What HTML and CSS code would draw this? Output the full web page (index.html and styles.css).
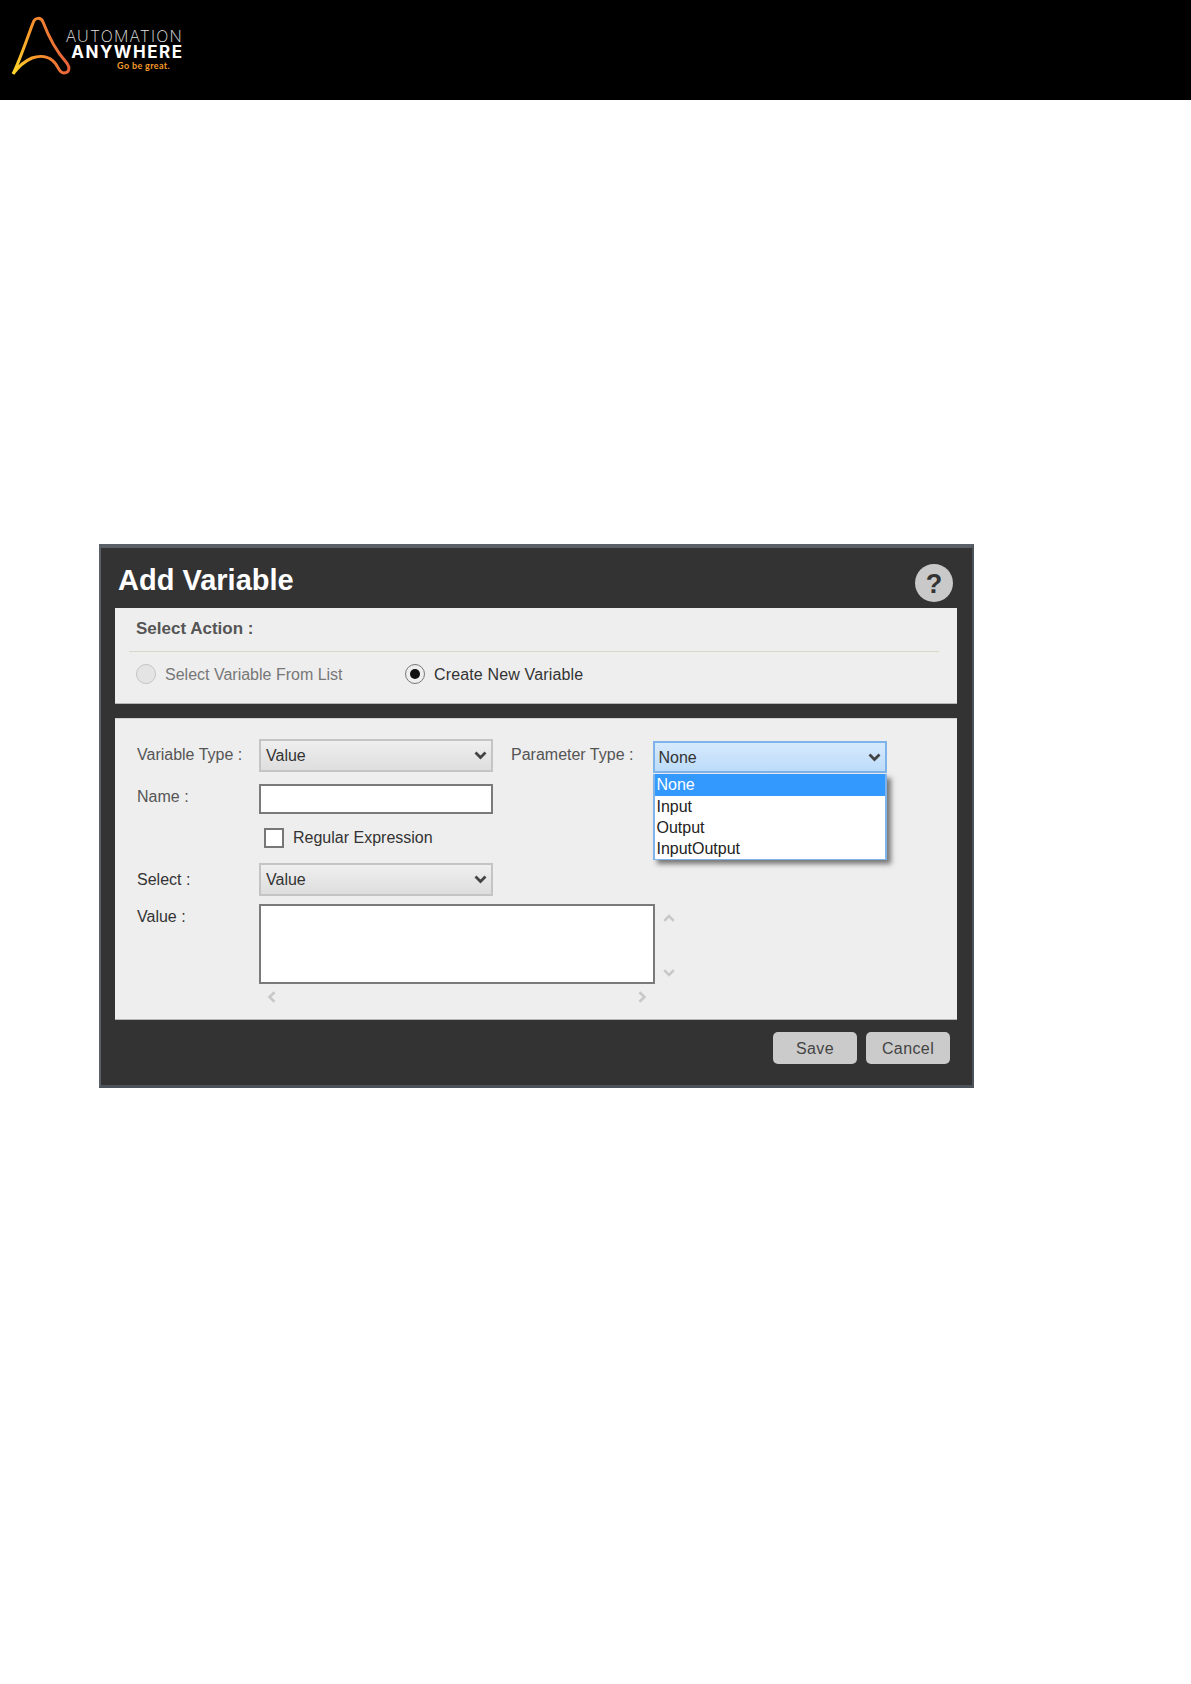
FILE: index.html
```html
<!DOCTYPE html>
<html lang="en">
<head>
<meta charset="utf-8">
<title>Add Variable</title>
<link rel="stylesheet" href="styles.css">
</head>
<body>
<header class="topbar">
  <div class="logo">
    <svg class="logo-mark" width="76" height="80" viewBox="0 0 76 80" fill="none">
      <defs>
        <linearGradient id="lg" gradientUnits="userSpaceOnUse" x1="13" y1="70" x2="68" y2="58">
          <stop offset="0" stop-color="#ffd72a"/>
          <stop offset="0.45" stop-color="#f9982c"/>
          <stop offset="1" stop-color="#e9603a"/>
        </linearGradient>
      </defs>
      <path d="M13 74 C20 60 28 36 33 23 C35 17 41 17 43 22 C48 35 57 52 66 62 C71 68 69 73 64 73 C59 73 58 66 55 63 C49 56 40 55 32 58 C25 61 18 67 13 74" stroke="url(#lg)" stroke-width="3" stroke-linejoin="round"/>
    </svg>
    <div class="logo-text">
      <div class="logo-top">AUTOMATION</div>
      <div class="logo-main">ANYWHERE</div>
      <div class="logo-tag">Go be great.</div>
    </div>
  </div>
</header>

<main class="dialog">
  <div class="dialog-head">
    <h1 class="dialog-title">Add Variable</h1>
    <div class="help">?</div>
  </div>

  <section class="panel panel-action">
    <div class="action-title">Select Action :</div>
    <div class="action-rule"></div>
    <div class="action-row">
      <div class="radio-item radio-item-first">
        <span class="radio radio-off"></span>
        <span class="radio-label-off">Select Variable From List</span>
      </div>
      <div class="radio-item">
        <span class="radio radio-on"></span>
        <span class="radio-label-on">Create New Variable</span>
      </div>
    </div>
  </section>

  <section class="panel panel-form">
    <div class="row row-type">
      <div class="label">Variable Type :</div>
      <div class="select">
        <span>Value</span>
        <svg class="chev" width="13" height="9" viewBox="0 0 13 9"><path d="M1.500 1.500 6.500 6.500 11.500 1.500" fill="none" stroke="#444" stroke-width="2.800"/></svg>
      </div>
      <div class="label label-param">Parameter Type :</div>
      <div class="param">
        <div class="select select-active">
          <span class="active-value">None</span>
          <svg class="chev" width="13" height="9" viewBox="0 0 13 9"><path d="M1.500 1.500 6.500 6.500 11.500 1.500" fill="none" stroke="#444" stroke-width="2.800"/></svg>
        </div>
        <ul class="menu">
          <li class="menu-sel">None</li>
          <li>Input</li>
          <li>Output</li>
          <li>InputOutput</li>
        </ul>
      </div>
    </div>

    <div class="row row-name">
      <div class="label label-name">Name :</div>
      <div class="input"></div>
    </div>

    <div class="row row-check">
      <span class="checkbox"></span>
      <span class="check-label">Regular Expression</span>
    </div>

    <div class="row row-select">
      <div class="label">Select :</div>
      <div class="select">
        <span>Value</span>
        <svg class="chev" width="13" height="9" viewBox="0 0 13 9"><path d="M1.500 1.500 6.500 6.500 11.500 1.500" fill="none" stroke="#444" stroke-width="2.800"/></svg>
      </div>
    </div>

    <div class="row row-value">
      <div class="label label-value">Value :</div>
      <div class="value-wrap">
        <div class="value-top">
          <div class="textarea"></div>
          <div class="vscroll">
            <svg width="12" height="8" viewBox="0 0 12 8"><path d="M1.200 6.800 6 2 10.800 6.800" fill="none" stroke="#c8c8c8" stroke-width="2.600"/></svg>
            <svg width="12" height="8" viewBox="0 0 12 8"><path d="M1.200 1.200 6 6 10.800 1.200" fill="none" stroke="#c8c8c8" stroke-width="2.600"/></svg>
          </div>
        </div>
        <div class="hscroll">
          <svg width="9" height="12" viewBox="0 0 9 12"><path d="M7.500 1.200 2.500 6 7.500 10.800" fill="none" stroke="#c8c8c8" stroke-width="2.600"/></svg>
          <svg width="9" height="12" viewBox="0 0 9 12"><path d="M1.500 1.200 6.500 6 1.500 10.800" fill="none" stroke="#c8c8c8" stroke-width="2.600"/></svg>
        </div>
      </div>
    </div>
  </section>

  <div class="dialog-foot">
    <div class="btn">Save</div>
    <div class="btn">Cancel</div>
  </div>
</main>
</body>
</html>
```

FILE: styles.css
```css
* { box-sizing: border-box; }

body {
  margin: 0;
  background: #fff;
  font-family: "Liberation Sans", Arial, sans-serif;
  font-size: 16px;
  color: #333;
}

/* Top bar */
.topbar {
  height: 100px;
  background: #000;
}
.logo {
  display: flex;
  align-items: flex-start;
  height: 100px;
}
.logo-mark {
  flex: none;
}
.logo-text {
  width: 118px;
  margin-left: -12px;
  padding-top: 29px;
  text-align: right;
  color: #fff;
}
.logo-top {
  font-family: Inter, sans-serif;
  font-weight: 200;
  font-size: 16px;
  line-height: 15px;
  color: #e4e4e4;
  letter-spacing: 1.200px;
  margin-right: -1px;
  white-space: nowrap;
}
.logo-main {
  font-family: Inter, sans-serif;
  font-weight: 700;
  font-size: 17px;
  line-height: 17px;
  letter-spacing: 1.500px;
  margin-right: -1.500px;
  white-space: nowrap;
}
.logo-tag {
  font-family: Lato, sans-serif;
  font-weight: 700;
  font-size: 9px;
  line-height: 10px;
  color: #f39a2b;
  letter-spacing: 0.350px;
  padding-right: 12px;
  white-space: nowrap;
}

/* Dialog */
.dialog {
  width: 875px;
  height: 544px;
  margin: 444px 0 0 99px;
  padding: 0 15px 0 14px;
  background: #333;
  border-style: solid;
  border-color: #5b6068 #4c5259 #4c5259 #5b6068;
  border-width: 4px 2px 3px 2px;
  display: flex;
  flex-direction: column;
}
.dialog-head {
  height: 60px;
  display: flex;
  justify-content: space-between;
  align-items: flex-start;
}
.dialog-title {
  margin: 14px 0 0 3px;
  font-size: 29px;
  line-height: 36px;
  font-weight: 700;
  color: #fff;
}
.help {
  width: 38px;
  height: 38px;
  margin: 16px 4px 0 0;
  border-radius: 50%;
  background: #c9c9c9;
  color: #333;
  font-size: 27px;
  font-weight: 700;
  line-height: 40px;
  text-align: center;
}

/* Panels */
.panel {
  background: #eee;
  border-bottom: 1px solid #b5b5b5;
}
.panel-action {
  height: 96px;
  padding: 11px 18px 0 14px;
}
.action-title {
  margin-left: 7px;
  font-weight: 700;
  font-size: 17px;
  line-height: 20px;
  color: #555;
}
.action-rule {
  height: 1px;
  margin-top: 12px;
  background: #d8d9c4;
}
.action-row {
  display: flex;
  align-items: center;
  margin-top: 12px;
  height: 20px;
  padding-left: 7px;
}
.radio-item {
  display: flex;
  align-items: center;
  gap: 9px;
}
.radio-item-first {
  width: 269px;
}
.radio {
  flex: none;
  width: 20px;
  height: 20px;
  border-radius: 50%;
}
.radio-off {
  background: #e4e4e4;
  border: 1px solid #c4c4c4;
}
.radio-on {
  background: #eee;
  border: 1px solid #777;
  position: relative;
}
.radio-on::after {
  content: "";
  position: absolute;
  left: 4px;
  top: 4px;
  width: 10px;
  height: 10px;
  border-radius: 50%;
  background: #111;
}
.radio-label-off {
  color: #777;
  line-height: 22px;
  padding-top: 1px;
}
.radio-label-on {
  color: #333;
  letter-spacing: 0.150px;
  line-height: 22px;
  padding-top: 1px;
}

.panel-form {
  height: 302px;
  margin-top: 14px;
  padding: 20px 0 0 22px;
  border-top: 1px solid #d0d0d0;
}
.row {
  display: flex;
  align-items: flex-start;
}
.label {
  width: 122px;
  flex: none;
  line-height: 32px;
  color: #555;
}
.label-name {
  line-height: 25px;
}
.select {
  width: 234px;
  height: 33px;
  flex: none;
  padding: 0 4px 0 5px;
  display: flex;
  align-items: center;
  justify-content: space-between;
  border: 2px solid #c4c4c4;
  background: linear-gradient(#efefef, #dedede);
  color: #333;
}
.label-param {
  width: auto;
  margin-left: 18px;
  margin-right: 20px;
}
.param {
  position: relative;
  margin-top: 2px;
}
.select-active {
  height: 32px;
  padding-left: 3px;
  border: 2px solid #7eb4ea;
  background: linear-gradient(#d6e9fc, #bcdcfa);
}
.active-value {
  padding-top: 2px;
}
.menu {
  position: absolute;
  left: 0;
  top: 33px;
  width: 234px;
  height: 86px;
  margin: 0;
  padding: 0;
  list-style: none;
  background: #fff;
  border: 2px solid #7eb4ea;
  border-top-width: 0;
  border-bottom-width: 1px;
  box-shadow: 4px 4px 5px rgba(0, 0, 0, 0.5);
  color: #222;
  line-height: 22px;
}
.menu li {
  height: 21px;
  padding-left: 1px;
}
.menu .menu-sel {
  height: 22px;
  background: #3399ff;
  color: #fff;
}
.row-name {
  margin-top: 11px;
}
.input {
  width: 234px;
  height: 30px;
  flex: none;
  background: #fff;
  border: 2px solid #7a7a7a;
}
.row-check {
  margin-top: 14px;
  margin-left: 127px;
  align-items: center;
  height: 20px;
}
.checkbox {
  width: 20px;
  height: 20px;
  background: #fff;
  border: 2px solid #777;
}
.check-label {
  margin-left: 9px;
  color: #333;
}
.row-select {
  margin-top: 15px;
}
.row-select .label {
  line-height: 33px;
  color: #333;
}
.row-value {
  margin-top: 8px;
}
.label-value {
  line-height: 25px;
  color: #333;
}
.value-wrap {
  width: 416px;
}
.value-top {
  display: flex;
}
.textarea {
  width: 396px;
  height: 80px;
  background: #fff;
  border: 2px solid #7a7a7a;
}
.vscroll {
  width: 20px;
  padding: 10px 0 7px 8px;
  display: flex;
  flex-direction: column;
  justify-content: space-between;
}
.hscroll {
  width: 396px;
  margin-top: 7px;
  padding: 0 8px;
  display: flex;
  justify-content: space-between;
}

/* Footer */
.dialog-foot {
  display: flex;
  justify-content: flex-end;
  gap: 9px;
  margin-top: 12px;
  padding-right: 7px;
}
.btn {
  width: 84px;
  height: 32px;
  border-radius: 5px;
  background: #cbcbcb;
  color: #444;
  line-height: 34px;
  text-align: center;
  letter-spacing: 0.4px;
}
```
